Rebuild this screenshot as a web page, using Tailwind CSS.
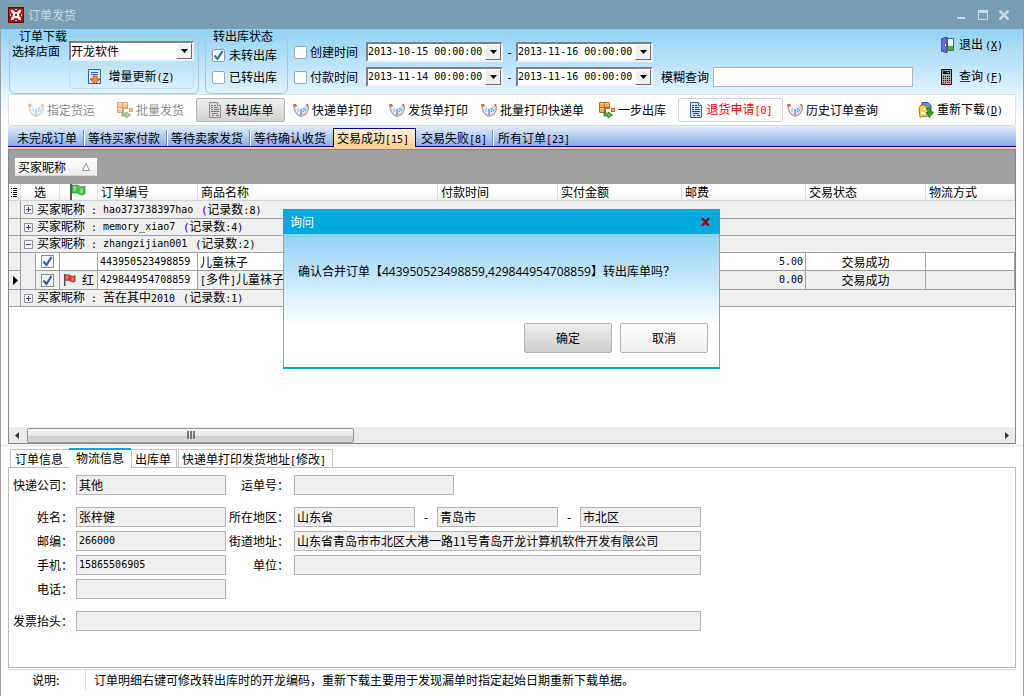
<!DOCTYPE html>
<html lang="zh-CN">
<head>
<meta charset="utf-8">
<title>订单发货</title>
<script src="https://cdn.jsdelivr.net/npm/@tailwindcss/browser@4"></script>
</head>
<body class="min-h-screen flex flex-col bg-white text-black text-xs leading-4 font-['Noto_Sans_CJK_SC',sans-serif] relative whitespace-nowrap overflow-x-hidden">

<svg class="hidden" aria-hidden="true">
  <symbol id="book" viewBox="0 0 16 16">
    <path d="M0 3h3l4 3 1 1 2-2 3-2h2l1 2-1 5-2 3-4 2H7l-3-2-3-4z" fill="#b9cfea"/>
    <path d="M3 4l4 2 1 2v5l-4-2-2-4z" fill="#eaf3fc"/>
    <path d="M9 6l4-3 1 4-1 4-4 3z" fill="#d3e4f7"/>
    <path d="M8 7v6M11 6v2M10 10l1-1M12 9l1-1" stroke="#3f78c4" fill="none"/>
    <path d="M5 6l1 4M4 7l1 3" stroke="#9cc0e6" stroke-width=".8" fill="none"/>
    <path d="M0 3.500h3M1 5l1 4 2 3 3 2h2l4-2 2-3 .5-4" stroke="#e2935a" fill="none"/>
    <path d="M0 2h3l1 2-3 1zM13 2h2l1 3-2-1z" fill="#e2672a"/>
  </symbol>
  <symbol id="boxes" viewBox="0 0 16 16">
    <path d="M0 1l1-1h9l1 1v6H7v4H1l-1-1z" fill="#c4641f"/>
    <path d="M1 1h4v4H1zM6 1h4v4H6zM1 6h4v4H1z" fill="#f8a855"/>
    <path d="M1 1h4v1H1zM6 1h4v1H6zM1 6h4v1H1z" fill="#ffd395"/>
    <path d="M12 6h4v4h-4z" fill="#d8651f"/><path d="M13 7h2v2h-2z" fill="#f9a45c"/>
    <path d="M5 10h2v2h2v-2l4.500 3L9 16v-2H5z" fill="#5cc84e" stroke="#176b1c" stroke-width=".8"/>
  </symbol>
  <symbol id="doc" viewBox="0 0 14 16">
    <path d="M1.500 .5h8l3 3v12h-11z" fill="#cfe0fa" stroke="#3e63b5"/>
    <path d="M9.500 .5v3h3" fill="#fff" stroke="#3e63b5"/>
    <path d="M3 3.500h2M6 3.500h2M3 5.500h2M6 5.500h4M3 7.500h2M6 7.500h5M3 9.500h8M4 11.500h6M4 13.500h2M8 13.500h3" stroke="#28479a" fill="none"/>
  </symbol>
  <symbol id="docgray" viewBox="0 0 14 16">
    <path d="M1.500 .5h8l3 3v12h-11z" fill="#dcdcdc" stroke="#8d8d8d"/>
    <path d="M9.500 .5v3h3" fill="#f6f6f6" stroke="#8d8d8d"/>
    <path d="M3 3.500h2M6 3.500h2M3 5.500h2M6 5.500h4M3 7.500h2M6 7.500h5M3 9.500h8M4 11.500h6M4 13.500h2M8 13.500h3" stroke="#777" fill="none"/>
  </symbol>
  <symbol id="plus" viewBox="0 0 9 9"><path d="M.5 .5h8v8h-8z" fill="#f7f7f7" stroke="#919191"/><path d="M2 4.500h5M4.500 2v5" stroke="#2c4a9c"/></symbol>
  <symbol id="minus" viewBox="0 0 9 9"><path d="M.5 .5h8v8h-8z" fill="#f7f7f7" stroke="#919191"/><path d="M2 4.500h5" stroke="#2c4a9c"/></symbol>
  <symbol id="tick" viewBox="0 0 13 13"><path d="M2.500 6.500l3 3.500 5-8" fill="none" stroke="currentColor" stroke-width="2.200"/></symbol>
  <symbol id="flag" viewBox="0 0 16 16">
    <path d="M1 0v16" stroke="#333" stroke-width="1.600"/>
    <path d="M2 1h5l2 1 2 1 4-1v8l-3 1-3-1-2-1H2z" fill="currentColor" stroke="#1b5a22" stroke-opacity=".6" stroke-width=".8"/>
    <path d="M3 2h3v5H3zM10 4h3v5h-3z" fill="#fff" fill-opacity=".35"/>
  </symbol>
  <symbol id="arrow" viewBox="0 0 7 4"><path d="M0 0h7L3.500 4z" fill="#000"/></symbol>
</svg>

<!-- Title bar -->
<header class="h-[29px] bg-[#789eb1] flex items-center pl-2 pr-3.5 text-[#c6dae4]">
  <svg class="size-4" viewBox="0 0 16 16"><path d="M0 0h16v16H0z" fill="#5c0808"/><path d="M1 1h14v14H1z" fill="#b01515"/><path d="M3 3h2l2 2h2l2-2h2v2l-2 2v2l2 2v2h-2l-2-2H7l-2 2H3v-2l2-2V7L3 5z" fill="#fff"/><path d="M7 2h2v1H7zM7 13h2v1H7zM2 7h1v2H2zM13 7h1v2h-1z" fill="#f3c9c9"/><path d="M7 7h2v2H7z" fill="#b01515"/></svg>
  <h1 class="flex-1 pl-1">订单发货</h1>
  <button type="button" aria-label="最小化" class="h-4 mr-[13px]"><svg class="w-2 h-3" viewBox="0 0 8 12"><path d="M0 8h8v2H0z" fill="currentColor"/></svg></button>
  <button type="button" aria-label="最大化" class="h-4 mr-2.5"><svg class="w-2.5 h-2.5" viewBox="0 0 10 10"><path d="M.5 1v8.500h9V1z" fill="none" stroke="currentColor"/><path d="M0 0h10v3H0z" fill="currentColor"/></svg></button>
  <button type="button" aria-label="关闭" class="h-4"><svg class="w-3 h-2.5" viewBox="0 0 12 10"><path d="M1.500 .5l9 9M10.500 .5l-9 9" stroke="currentColor" stroke-width="2.600"/></svg></button>
</header>

<div class="flex-1 flex flex-col border-x border-[#a0a0a0] bg-[linear-gradient(#8fd2f5,#fff_88px)] px-[7px]">

  <!-- Filters -->
  <section class="h-[65px] flex items-start pl-px pr-[13px]">
    <fieldset class="w-[190px] h-[65px] border border-[#a9c6d4] rounded-md px-0.5">
      <legend class="h-3.5 leading-3.5 ml-1.5 px-px">订单下载</legend>
      <div class="flex items-center -mt-0.5">
        <label for="shop" class="w-[57px]">选择店面</label>
        <div class="relative w-[125px] h-5 border-2 border-t-[#808080] border-l-[#808080] border-b-[#f0f0f0] border-r-[#f0f0f0] bg-white">
          <select id="shop" class="appearance-none w-full h-4 leading-4 block outline-none"><option>开龙软件</option></select>
          <span class="pointer-events-none absolute right-0 top-0 w-4 h-4 bg-[#f0f0f0] border border-t-white border-l-white border-b-[#707070] border-r-[#707070] flex items-center justify-center"><svg class="w-[7px] h-1"><use href="#arrow"/></svg></span>
        </div>
      </div>
      <button type="button" class="ml-[57px] mt-1 w-[125px] h-6 rounded-sm border border-[#c9d9e2] flex items-center justify-center gap-1.5">
        <svg class="w-3.5 h-4" viewBox="0 0 14 16"><path d="M.5 .5h12v14H.5z" fill="#d7e6fa" stroke="#3463a8"/><path d="M3 3.500h7M3 5.500h7" stroke="#3463a8"/><path d="M5 7h4v3h3l-5 5-5-5h3z" fill="#f0913a" stroke="#9a4a12" stroke-width=".8"/></svg>
        <span>增量更新<span class="font-['DejaVu_Sans_Mono'] text-[10px]">(<u>Z</u>)</span></span>
      </button>
    </fieldset>

    <fieldset class="ml-1.5 w-[83px] h-[65px] border border-[#a9c6d4] rounded-md px-1.5">
      <legend class="h-3.5 leading-3.5 ml-px">转出库状态</legend>
      <label class="flex items-center gap-1 mt-1 h-4">
        <span class="relative block size-[13px]"><input type="checkbox" checked class="appearance-none block size-[13px] bg-white border border-[#8e9ca6] rounded-xs"><svg class="absolute inset-0 size-[13px] text-[#17799f] pointer-events-none"><use href="#tick"/></svg></span>未转出库</label>
      <label class="flex items-center gap-1 mt-1.5 h-4">
        <input type="checkbox" class="appearance-none size-[13px] bg-white border border-[#9aa8b0] rounded-xs">已转出库</label>
    </fieldset>

    <div class="flex flex-col gap-[5px] ml-1.5 pt-[13px]">
      <div class="flex items-center h-5">
        <label class="flex items-center gap-[3px] w-[72px]"><input type="checkbox" class="appearance-none size-[13px] bg-white border border-[#9aa8b0] rounded-xs">创建时间</label>
        <div class="relative w-[137px] h-5 border-2 border-t-[#808080] border-l-[#808080] border-b-[#f0f0f0] border-r-[#f0f0f0] bg-white">
          <select aria-label="创建时间起" class="appearance-none w-full h-4 leading-4 block outline-none font-['DejaVu_Sans_Mono'] text-[10px]"><option>2013-10-15 00:00:00</option></select>
          <span class="pointer-events-none absolute right-0 top-0 w-4 h-4 bg-[#f0f0f0] border border-t-white border-l-white border-b-[#707070] border-r-[#707070] flex items-center justify-center"><svg class="w-[7px] h-1"><use href="#arrow"/></svg></span>
        </div>
        <span class="w-[13px] text-center">-</span>
        <div class="relative w-[137px] h-5 border-2 border-t-[#808080] border-l-[#808080] border-b-[#f0f0f0] border-r-[#f0f0f0] bg-white">
          <select aria-label="创建时间止" class="appearance-none w-full h-4 leading-4 block outline-none font-['DejaVu_Sans_Mono'] text-[10px]"><option>2013-11-16 00:00:00</option></select>
          <span class="pointer-events-none absolute right-0 top-0 w-4 h-4 bg-[#f0f0f0] border border-t-white border-l-white border-b-[#707070] border-r-[#707070] flex items-center justify-center"><svg class="w-[7px] h-1"><use href="#arrow"/></svg></span>
        </div>
      </div>
      <div class="flex items-center h-5">
        <label class="flex items-center gap-[3px] w-[72px]"><input type="checkbox" class="appearance-none size-[13px] bg-white border border-[#9aa8b0] rounded-xs">付款时间</label>
        <div class="relative w-[137px] h-5 border-2 border-t-[#808080] border-l-[#808080] border-b-[#f0f0f0] border-r-[#f0f0f0] bg-white">
          <select aria-label="付款时间起" class="appearance-none w-full h-4 leading-4 block outline-none font-['DejaVu_Sans_Mono'] text-[10px]"><option>2013-11-14 00:00:00</option></select>
          <span class="pointer-events-none absolute right-0 top-0 w-4 h-4 bg-[#f0f0f0] border border-t-white border-l-white border-b-[#707070] border-r-[#707070] flex items-center justify-center"><svg class="w-[7px] h-1"><use href="#arrow"/></svg></span>
        </div>
        <span class="w-[13px] text-center">-</span>
        <div class="relative w-[137px] h-5 border-2 border-t-[#808080] border-l-[#808080] border-b-[#f0f0f0] border-r-[#f0f0f0] bg-white">
          <select aria-label="付款时间止" class="appearance-none w-full h-4 leading-4 block outline-none font-['DejaVu_Sans_Mono'] text-[10px]"><option>2013-11-16 00:00:00</option></select>
          <span class="pointer-events-none absolute right-0 top-0 w-4 h-4 bg-[#f0f0f0] border border-t-white border-l-white border-b-[#707070] border-r-[#707070] flex items-center justify-center"><svg class="w-[7px] h-1"><use href="#arrow"/></svg></span>
        </div>
      </div>
    </div>

    <div class="flex items-center gap-1 ml-2 pt-[38px]">
      <label for="fuzzy">模糊查询</label>
      <input id="fuzzy" type="text" class="w-[200px] h-5 bg-white border border-[#b4b4b4] px-1 outline-none">
    </div>

    <div class="flex flex-col gap-4 ml-auto pt-2">
      <button type="button" class="flex items-center gap-1 h-4">
        <svg class="w-3.5 h-4" viewBox="0 0 14 16"><path d="M6.500 1.500h6v12h-6z" fill="#e8f4f4" stroke="#56568f"/><path d="M7 9h5v4H7z" fill="#43b821"/><path d="M0 2l6-2v16l-6-2z" fill="#6a66d6" stroke="#35338a" stroke-width=".8"/><path d="M4 7h1v2H4z" fill="#fff"/></svg>
        <span>退出<span class="font-['DejaVu_Sans_Mono'] text-[10px] ml-0.5">(<u>X</u>)</span></span></button>
      <button type="button" class="flex items-center gap-1 h-4">
        <svg class="w-3.5 h-4" viewBox="0 0 14 16"><path d="M.5 .5h10v15H.5z" fill="#a8a8a8" stroke="#111"/><path d="M2 2h7v3H2z" fill="#0a1c20"/><path d="M6 3h2v1H6z" fill="#3dd"/><path d="M2 7.500h7M2 9.500h7M2 11.500h7M2 13.500h3" stroke="#111" stroke-dasharray="1 1"/><path d="M6 13h3v1H6z" fill="#e11"/></svg>
        <span>查询<span class="font-['DejaVu_Sans_Mono'] text-[10px] ml-0.5">(<u>F</u>)</span></span></button>
    </div>
  </section>

  <!-- Toolbar -->
  <section class="h-8 bg-white border border-[#dcdcdc] rounded-xs flex items-center pl-[19px] pr-3">
    <button type="button" disabled class="flex items-center gap-[3px] h-6 text-[#8c8c8c]"><svg class="size-4 opacity-50"><use href="#book"/></svg>指定货运</button>
    <button type="button" disabled class="flex items-center gap-[3px] h-6 ml-[22px] text-[#8c8c8c]"><svg class="size-4 opacity-60"><use href="#boxes"/></svg>批量发货</button>
    <button type="button" class="flex items-center justify-center gap-1 h-6 w-[89px] ml-3 border border-[#b4b4b4] rounded-xs bg-linear-to-b from-[#efefef] to-[#d2d2d2]"><svg class="w-3.5 h-4"><use href="#docgray"/></svg>转出库单</button>
    <button type="button" class="flex items-center gap-[3px] h-6 ml-2"><svg class="size-4"><use href="#book"/></svg>快递单打印</button>
    <button type="button" class="flex items-center gap-[3px] h-6 ml-[17px]"><svg class="size-4"><use href="#book"/></svg>发货单打印</button>
    <button type="button" class="flex items-center gap-[3px] h-6 ml-[13px]"><svg class="size-4"><use href="#book"/></svg>批量打印快递单</button>
    <button type="button" class="flex items-center gap-[3px] h-6 ml-[15px]"><svg class="size-4"><use href="#boxes"/></svg>一步出库</button>
    <button type="button" class="flex items-center justify-center gap-1 h-6 w-[105px] ml-3 border border-[#d2d2d2] rounded-xs text-[#f00]"><svg class="w-3.5 h-4"><use href="#doc"/></svg><span>退货申请<span class="font-['DejaVu_Sans_Mono'] text-[10px]">[0]</span></span></button>
    <button type="button" class="flex items-center gap-[3px] h-6 ml-1"><svg class="size-4"><use href="#book"/></svg>历史订单查询</button>
    <button type="button" class="flex items-center gap-[3px] h-6 ml-auto">
      <svg class="size-4" viewBox="0 0 16 16"><path d="M4 .5h6l3 3v8H4z" fill="#5f93dc" stroke="#27529d"/><path d="M1 6l2-3h3l1 1h4v10l-9 1z" fill="#f4d255" stroke="#a0791a"/><path d="M5 6h4v2H5zM3 10h5v2H3z" fill="#fff6c8"/><path d="M8 6c3-1 5 1 5 4h2.500l-4 5.500-3.500-5H10c0-2-1-3-2-4.500z" fill="#37a72f" stroke="#186016" stroke-width=".8"/></svg>
      <span>重新下载<span class="font-['DejaVu_Sans_Mono'] text-[10px]">(<u>D</u>)</span></span></button>
  </section>

  <!-- Order status tabs -->
  <nav class="h-[21px] bg-linear-to-b from-[#e1edfc] to-[#8bade3] border-b border-[#00008b] flex items-end pl-[9px]">
    <a href="#" class="h-4 w-[67px] border-r border-[#6a8ccb]">未完成订单</a>
    <a href="#" class="h-4 w-[83px] pl-[3px] border-r border-l border-l-white border-r-[#6a8ccb]">等待买家付款</a>
    <a href="#" class="h-4 w-[83px] pl-[3px] border-r border-l border-l-white border-r-[#6a8ccb]">等待卖家发货</a>
    <a href="#" class="h-4 w-[83px] pl-[3px] border-l border-white">等待确认收货</a>
    <a href="#" aria-current="page" class="h-[19px] w-[83px] pl-[3px] pt-px -mb-px border border-b-0 border-[#00008b] bg-linear-to-b from-[#fff3dc] to-[#ffd08c]">交易成功<span class="font-['DejaVu_Sans_Mono'] text-[10px]">[15]</span></a>
    <a href="#" class="h-4 w-[77px] pl-[5px] border-r border-[#6a8ccb]">交易失败<span class="font-['DejaVu_Sans_Mono'] text-[10px]">[8]</span></a>
    <a href="#" class="h-4 pl-1 border-l border-white">所有订单<span class="font-['DejaVu_Sans_Mono'] text-[10px]">[23]</span></a>
  </nav>
  <div class="h-0.5 bg-[#ffd08c]"></div>

  <!-- Order grid -->
  <section class="flex-1 flex flex-col border border-[#828790] bg-white">
    <div class="h-[34px] bg-[#a0a0a0] px-1.5 pt-2">
      <div class="w-[82px] h-[18px] px-[3px] flex items-center justify-between bg-linear-to-b from-white to-[#ececee] border-b border-[#d8d8d8]">买家昵称
        <svg class="size-2 mr-1" viewBox="0 0 8 8"><path d="M4 .5l3.500 7h-7z" fill="#fff" stroke="#999"/></svg></div>
    </div>
    <table class="w-full table-fixed border-separate border-spacing-0 leading-4">
      <colgroup><col class="w-3"><col class="w-[15px]"><col class="w-6"><col class="w-[38px]"><col class="w-[100px]"><col class="w-[240px]"><col class="w-[120px]"><col class="w-[124px]"><col class="w-[124px]"><col class="w-[120px]"><col></colgroup>
      <thead>
        <tr class="bg-linear-to-b from-white from-50% to-[#f0f0f2] *:h-[17px] *:p-0 *:font-normal *:text-left *:border-b *:border-r *:border-b-[#d2d2d5] *:border-r-[#e0e0e3]">
          <th scope="col" aria-label="行指示"><svg class="w-2.5 h-3" viewBox="0 0 10 12"><path d="M2 2.500h1M4 2.500h4M4 4.500h4M2 6.500h1M4 6.500h4M4 8.500h4M2 10.500h1M4 10.500h4" stroke="#000"/></svg></th>
          <th scope="col" colspan="2"><div class="text-center">选</div></th>
          <th scope="col" aria-label="旗帜"><svg class="size-4 ml-2.5 text-[#3fc246]"><use href="#flag"/></svg></th>
          <th scope="col"><div class="pl-[3px]">订单编号</div></th><th scope="col"><div class="pl-[3px]">商品名称</div></th><th scope="col"><div class="pl-[3px]">付款时间</div></th><th scope="col"><div class="pl-[3px]">实付金额</div></th><th scope="col"><div class="pl-[3px]">邮费</div></th><th scope="col"><div class="pl-[3px]">交易状态</div></th><th scope="col"><div class="pl-[3px]">物流方式</div></th>
        </tr>
      </thead>
      <tbody>
        <tr class="bg-[#efefef] *:h-[18px] *:p-0 *:border-b *:border-[#a0a0a0]"><td class="border-r"></td>
          <td colspan="10"><div class="flex items-center h-4 pl-[3px]"><svg class="size-[9px] mr-1"><use href="#plus"/></svg><span class="w-[66px]">买家昵称<span class="font-['DejaVu_Sans_Mono'] text-[10px] ml-1.5">:</span></span><span class="font-['DejaVu_Sans_Mono'] text-[10px] mr-2">hao373738397hao</span><span><span class="font-['DejaVu_Sans_Mono'] text-[10px]">(</span>记录数<span class="font-['DejaVu_Sans_Mono'] text-[10px]">:8)</span></span></div></td></tr>
        <tr class="bg-[#efefef] *:h-[17px] *:p-0 *:border-b *:border-[#a0a0a0]"><td class="border-r"></td>
          <td colspan="10"><div class="flex items-center h-4 pl-[3px]"><svg class="size-[9px] mr-1"><use href="#plus"/></svg><span class="w-[66px]">买家昵称<span class="font-['DejaVu_Sans_Mono'] text-[10px] ml-1.5">:</span></span><span class="font-['DejaVu_Sans_Mono'] text-[10px] mr-2">memory_xiao7</span><span><span class="font-['DejaVu_Sans_Mono'] text-[10px]">(</span>记录数<span class="font-['DejaVu_Sans_Mono'] text-[10px]">:4)</span></span></div></td></tr>
        <tr class="bg-[#efefef] *:h-[17px] *:p-0 *:border-b *:border-[#a0a0a0]"><td class="border-r"></td>
          <td colspan="10"><div class="flex items-center h-4 pl-[3px]"><svg class="size-[9px] mr-1"><use href="#minus"/></svg><span class="w-[66px]">买家昵称<span class="font-['DejaVu_Sans_Mono'] text-[10px] ml-1.5">:</span></span><span class="font-['DejaVu_Sans_Mono'] text-[10px] mr-2">zhangzijian001</span><span><span class="font-['DejaVu_Sans_Mono'] text-[10px]">(</span>记录数<span class="font-['DejaVu_Sans_Mono'] text-[10px]">:2)</span></span></div></td></tr>
        <tr class="*:h-[18px] *:p-0 *:border-b *:border-r *:border-[#a0a0a0] *:overflow-hidden">
          <td class="bg-[#efefef]"></td><td class="bg-[#efefef]" rowspan="2"></td>
          <td><span class="relative block size-[13px] mx-auto"><input type="checkbox" aria-label="选择 443950523498859" checked class="appearance-none block size-[13px] bg-[#f4f4f4] border border-[#8f8f8f]"><svg class="absolute inset-0 size-[13px] text-[#3c5fa8] pointer-events-none"><use href="#tick"/></svg></span></td>
          <td></td>
          <td><div class="pl-0.5 font-['DejaVu_Sans_Mono'] text-[10px]">443950523498859</div></td>
          <td><div class="pl-0.5">儿童袜子</div></td><td></td><td></td>
          <td><div class="pr-0.5 text-right font-['DejaVu_Sans_Mono'] text-[10px]">5.00</div></td>
          <td><div class="text-center">交易成功</div></td><td></td></tr>
        <tr class="*:h-[18px] *:p-0 *:border-b *:border-r *:border-[#a0a0a0] *:overflow-hidden bg-[#efefef]">
          <td><svg class="w-[5px] h-[9px] ml-1" viewBox="0 0 5 9"><path d="M0 0l5 4.500L0 9z"/></svg></td>
          <td><span class="relative block size-[13px] mx-auto"><input type="checkbox" aria-label="选择 429844954708859" checked class="appearance-none block size-[13px] bg-[#f4f4f4] border border-[#8f8f8f]"><svg class="absolute inset-0 size-[13px] text-[#3c5fa8] pointer-events-none"><use href="#tick"/></svg></span></td>
          <td><div class="flex items-center justify-between h-4 pl-1 pr-[3px]"><svg class="size-3 text-[#e53030]"><use href="#flag"/></svg>红</div></td>
          <td class="bg-white"><div class="pl-0.5 font-['DejaVu_Sans_Mono'] text-[10px]">429844954708859</div></td>
          <td><div class="pl-0.5"><span class="font-['DejaVu_Sans_Mono'] text-[10px]">[</span>多件<span class="font-['DejaVu_Sans_Mono'] text-[10px]">]</span>儿童袜子</div></td><td></td><td></td>
          <td><div class="pr-0.5 text-right font-['DejaVu_Sans_Mono'] text-[10px]">0.00</div></td>
          <td><div class="text-center">交易成功</div></td><td></td></tr>
        <tr class="bg-[#efefef] *:h-[17px] *:p-0 *:border-b *:border-[#a0a0a0]"><td class="border-r"></td>
          <td colspan="10"><div class="flex items-center h-4 pl-[3px]"><svg class="size-[9px] mr-1"><use href="#plus"/></svg><span class="w-[66px]">买家昵称<span class="font-['DejaVu_Sans_Mono'] text-[10px] ml-1.5">:</span></span><span class="mr-2">苦在其中<span class="font-['DejaVu_Sans_Mono'] text-[10px]">2010</span></span><span><span class="font-['DejaVu_Sans_Mono'] text-[10px]">(</span>记录数<span class="font-['DejaVu_Sans_Mono'] text-[10px]">:1)</span></span></div></td></tr>
      </tbody>
    </table>
    <div class="mt-auto h-4 bg-[#ebebeb] flex items-center justify-between pr-1.5">
      <div class="flex items-center h-4">
        <svg class="w-[18px] h-[7px]" viewBox="0 0 18 7"><path d="M10 0v7L6 3.500z" fill="#333"/></svg>
        <div class="w-[327px] h-[15px] rounded-xs border border-[#979797] bg-[linear-gradient(#f5f5f5,#e6e6e6_50%,#cfcfcf_50%,#d8d8d8)] flex items-center justify-center gap-px"><i class="w-0.5 h-2 bg-[#777]"></i><i class="w-0.5 h-2 bg-[#777]"></i><i class="w-0.5 h-2 bg-[#777]"></i></div>
      </div>
      <svg class="w-1 h-[7px]" viewBox="0 0 4 7"><path d="M0 0v7l4-3.500z" fill="#333"/></svg>
    </div>
  </section>

  <!-- Detail tabs -->
  <div class="bg-white border-t-[3px] border-[#f0f0f0] -mx-[7px] px-[7px]">
    <div class="flex items-end h-5 pl-0.5">
      <a href="#" class="h-[18px] w-[59px] pl-1 border border-r-0 border-[#c4c4c4] border-b-0 pt-px">订单信息</a>
      <a href="#" aria-current="page" class="h-5 w-[62px] pl-[7px] -mb-px relative bg-white border-t-2 border-[#00a9dc]">物流信息</a>
      <a href="#" class="h-[18px] w-[46px] pl-[3px] border border-[#c4c4c4] border-b-0 pt-px">出库单</a>
      <a href="#" class="h-[18px] w-[155px] ml-px pl-[3px] border border-[#c4c4c4] border-b-0 pt-px">快递单打印发货地址<span class="font-['DejaVu_Sans_Mono'] text-[10px]">[</span>修改<span class="font-['DejaVu_Sans_Mono'] text-[10px]">]</span></a>
    </div>
    <form class="border border-[#bcbcbc] pt-[7px] pl-1 pb-9 flex flex-col gap-1">
      <div class="flex items-center mb-2">
        <label for="f1" class="w-[63px] pr-[3px] text-right">快递公司：</label>
        <input id="f1" readonly value="其他" class="w-[150px] h-5 px-0.5 pb-0.5 bg-[#efefef] border border-[#b4b4b4]">
        <label for="f2" class="w-[68px] pr-[5px] text-right">运单号：</label>
        <input id="f2" readonly class="w-40 h-5 px-0.5 pb-0.5 bg-[#efefef] border border-[#b4b4b4]">
      </div>
      <div class="flex items-center">
        <label for="f3" class="w-[63px] pr-[3px] text-right">姓名：</label>
        <input id="f3" readonly value="张梓健" class="w-[150px] h-5 px-0.5 pb-0.5 bg-[#efefef] border border-[#b4b4b4]">
        <label for="f4" class="w-[68px] pr-[5px] text-right">所在地区：</label>
        <input id="f4" readonly value="山东省" class="w-[121px] h-5 px-0.5 pb-0.5 bg-[#efefef] border border-[#b4b4b4]">
        <span class="w-[22px] text-center">-</span>
        <input aria-label="城市" readonly value="青岛市" class="w-[121px] h-5 px-0.5 pb-0.5 bg-[#efefef] border border-[#b4b4b4]">
        <span class="w-[22px] text-center">-</span>
        <input aria-label="区县" readonly value="市北区" class="w-[121px] h-5 px-0.5 pb-0.5 bg-[#efefef] border border-[#b4b4b4]">
      </div>
      <div class="flex items-center">
        <label for="f5" class="w-[63px] pr-[3px] text-right">邮编：</label>
        <input id="f5" readonly value="266000" class="w-[150px] h-5 px-0.5 pb-0.5 bg-[#efefef] border border-[#b4b4b4] font-['DejaVu_Sans_Mono'] text-[10px]">
        <label for="f6" class="w-[68px] pr-[5px] text-right">街道地址：</label>
        <input id="f6" readonly value="山东省青岛市市北区大港一路11号青岛开龙计算机软件开发有限公司" class="w-[407px] h-5 px-0.5 pb-0.5 bg-[#efefef] border border-[#b4b4b4]">
      </div>
      <div class="flex items-center">
        <label for="f7" class="w-[63px] pr-[3px] text-right">手机：</label>
        <input id="f7" readonly value="15865506905" class="w-[150px] h-5 px-0.5 pb-0.5 bg-[#efefef] border border-[#b4b4b4] font-['DejaVu_Sans_Mono'] text-[10px]">
        <label for="f8" class="w-[68px] pr-[5px] text-right">单位：</label>
        <input id="f8" readonly class="w-[407px] h-5 px-0.5 pb-0.5 bg-[#efefef] border border-[#b4b4b4]">
      </div>
      <div class="flex items-center mb-2">
        <label for="f9" class="w-[63px] pr-[3px] text-right">电话：</label>
        <input id="f9" readonly class="w-[150px] h-5 px-0.5 pb-0.5 bg-[#efefef] border border-[#b4b4b4]">
      </div>
      <div class="flex items-center">
        <label for="f10" class="w-[63px] pr-[3px] text-right">发票抬头：</label>
        <input id="f10" readonly class="w-[625px] h-5 px-0.5 pb-0.5 bg-[#efefef] border border-[#b4b4b4]">
      </div>
    </form>
    <footer class="mt-px h-[27px] border-t border-[#dcdcdc] flex items-start">
      <span class="w-[78px] h-5 leading-5 pl-6 border-r border-[#dcdcdc]">说明:</span>
      <p class="leading-5 pl-2">订单明细右键可修改转出库时的开龙编码，重新下载主要用于发现漏单时指定起始日期重新下载单据。</p>
    </footer>
  </div>
</div>

<!-- Confirm dialog -->
<div role="dialog" aria-labelledby="dlg-title" class="absolute left-[283px] top-[209px] w-[437px] border-b-2 border-[#00a9dc]">
  <div class="h-[25px] bg-[#00a9dc] text-white flex items-center justify-between pl-[7px] pr-2.5">
    <h2 id="dlg-title">询问</h2>
    <button type="button" aria-label="关闭" class="h-4"><svg class="w-[9px] h-2" viewBox="0 0 9 8"><path d="M1 0l7 8M8 0L1 8" stroke="#a00000" stroke-width="2.400"/></svg></button>
  </div>
  <div class="border-x border-[#a0a0a0] bg-[linear-gradient(#8fd2f5,#fff_92px)] pt-[30px] pb-3.5 pl-3.5 pr-[11px]">
    <p class="font-['Open_Sans','Noto_Sans_CJK_SC',sans-serif]">确认合并订单【443950523498859,429844954708859】转出库单吗？</p>
    <div class="flex justify-end gap-2 mt-[43px]">
      <button type="button" class="w-[88px] h-[30px] border border-[#b4b4b4] rounded-xs bg-linear-to-b from-[#efefef] to-[#cecece]">确定</button>
      <button type="button" class="w-[88px] h-[30px] border border-[#b4b4b4] rounded-xs bg-linear-to-b from-white to-[#ededed]">取消</button>
    </div>
  </div>
</div>
</body>
</html>
